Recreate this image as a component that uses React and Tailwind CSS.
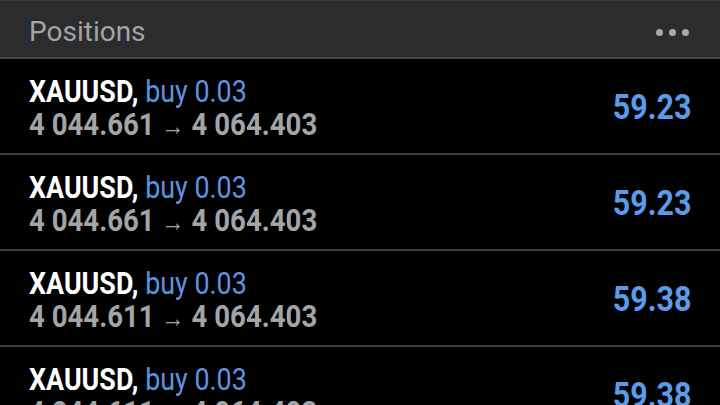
const POSITIONS = [
  { symbol: 'XAUUSD', side: 'buy', volume: '0.03', open: '4 044.661', current: '4 064.403', profit: '59.23' },
  { symbol: 'XAUUSD', side: 'buy', volume: '0.03', open: '4 044.661', current: '4 064.403', profit: '59.23' },
  { symbol: 'XAUUSD', side: 'buy', volume: '0.03', open: '4 044.611', current: '4 064.403', profit: '59.38' },
  { symbol: 'XAUUSD', side: 'buy', volume: '0.03', open: '4 044.611', current: '4 064.403', profit: '59.38' },
];

function PositionRow({ pos }) {
  return (
    <div className="flex h-[96px] shrink-0 items-center justify-between border-b-2 border-[#3f4042] pt-[5px] pl-[29px] pr-[29px]">
      <div className="flex flex-col">
        <div className="origin-left scale-x-[0.84] text-[32px] leading-[34px] whitespace-nowrap">
          <span className="font-bold text-white">{pos.symbol},</span>{' '}
          <span className="text-[#5a95e0]">{pos.side} {pos.volume}</span>
        </div>
        <div className="origin-left scale-x-[0.89] text-[31px] leading-[34px] font-bold text-[#a2a5a8] whitespace-nowrap">
          {pos.open} <span className="text-[26px] font-normal">→</span> {pos.current}
        </div>
      </div>
      <div className="origin-right scale-x-[0.87] text-[35px] font-bold text-[#5a9bea]">{pos.profit}</div>
    </div>
  );
}

export default function App() {
  return (
    <div className="flex h-[405px] w-[720px] flex-col overflow-hidden bg-black font-['Roboto',sans-serif]">
      <div className="flex h-[59px] shrink-0 items-center justify-between border-t border-b-2 border-t-[#3a3b3d] border-b-[#46474a] bg-[#2b2c2e] pt-[6px] pl-[29px] pr-[31px]">
        <span className="text-[28px] leading-[32px] text-[#a3a4a6]">Positions</span>
        <div className="flex items-center gap-[6px]">
          <span className="h-[7px] w-[7px] rounded-full bg-[#a9aaac]" />
          <span className="h-[7px] w-[7px] rounded-full bg-[#a9aaac]" />
          <span className="h-[7px] w-[7px] rounded-full bg-[#a9aaac]" />
        </div>
      </div>
      {POSITIONS.map((pos, i) => (
        <PositionRow key={i} pos={pos} />
      ))}
    </div>
  );
}
